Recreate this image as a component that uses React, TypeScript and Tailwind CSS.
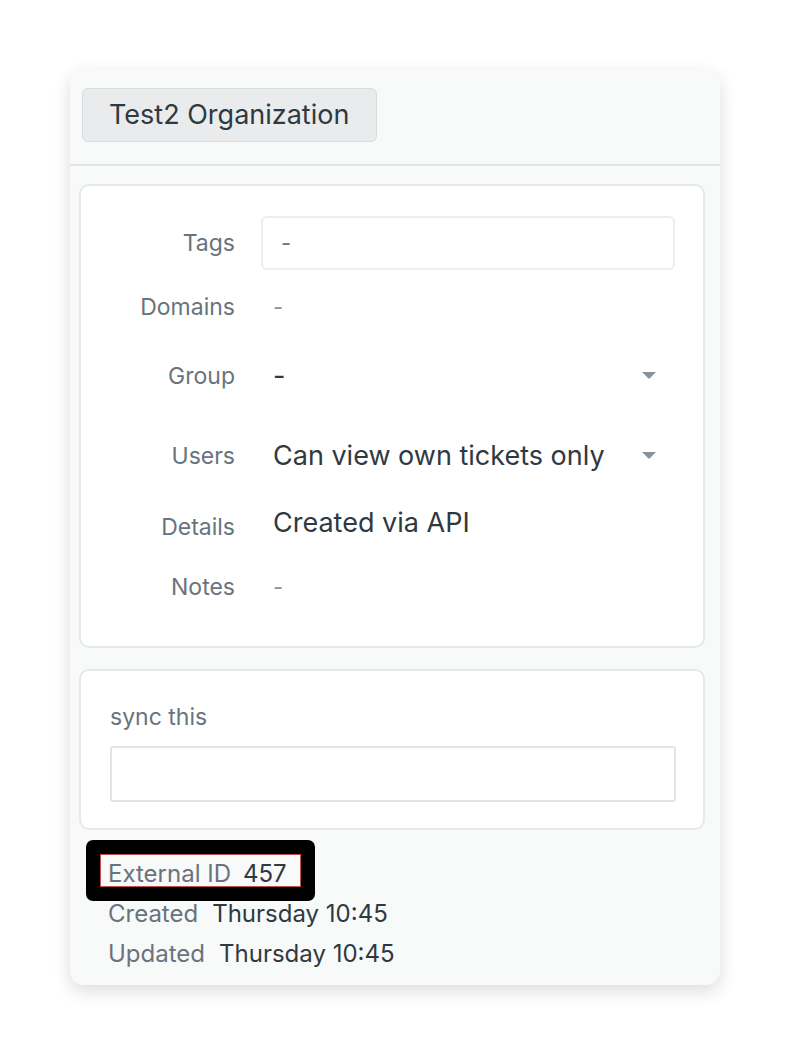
import React from "react";

const font = { fontFamily: "Inter, 'Liberation Sans', Arial, sans-serif" };

function Caret() {
  return (
    <svg width="14" height="8" viewBox="0 0 14 8" className="shrink-0">
      <path d="M0 0 L14 0 L7 7 Z" fill="#87929d" />
    </svg>
  );
}

type Row = { label: string; h: string; value: React.ReactNode };

export default function App() {
  const rows: Row[] = [
    {
      label: "Tags",
      h: "h-[54px]",
      value: (
        <div className="flex h-[54px] w-full items-center rounded-md border-2 border-[#eceef0] bg-white pl-[18px] text-[22px] text-[#68737d]">
          -
        </div>
      ),
    },
    { label: "Domains", h: "h-[74px]", value: <span className="pl-3 text-[22px] text-[#87929d]">-</span> },
    {
      label: "Group",
      h: "h-[64px]",
      value: (
        <div className="flex w-full items-center justify-between pl-3 pr-[19px]">
          <span className="text-[27px] text-[#2f3941]">-</span>
          <Caret />
        </div>
      ),
    },
    {
      label: "Users",
      h: "h-[96px]",
      value: (
        <div className="flex w-full items-center justify-between pl-3 pr-[19px]">
          <span className="text-[27px] text-[#2f3941]">Can view own tickets only</span>
          <Caret />
        </div>
      ),
    },
    {
      label: "Details",
      h: "h-[46px]",
      value: <span className="-mt-2 pl-3 text-[27px] text-[#2f3941]">Created via API</span>,
    },
    { label: "Notes", h: "h-[74px]", value: <span className="pl-3 text-[22px] text-[#87929d]">-</span> },
  ];

  return (
    <div className="min-h-[1056px] w-[790px] bg-white pt-[70px] pl-[70px]" style={font}>
      <div className="w-[650px] h-[915px] rounded-[14px] bg-[#f8f9f9] shadow-[0_6px_18px_rgba(0,0,0,0.14)]">
        {/* header */}
        <div className="h-[96px] border-b-2 border-[#e2e5e7] pl-3 pt-[18px]">
          <button className="h-[54px] w-[295px] rounded-md border border-[#d8dcde] bg-[#e9ebed] pl-[26px] text-left text-[27px] text-[#2f3941]">
            Test2 Organization
          </button>
        </div>

        {/* fields */}
        <div className="ml-[9px] mr-[15px] mt-[18px] rounded-[10px] border-2 border-[#e6e9eb] bg-white pt-[30px] pb-[22px]">
          {rows.map((r) => (
            <div key={r.label} className={`flex items-center ${r.h}`}>
              <div className="w-[154px] shrink-0 text-right text-[23px] text-[#68737d]">{r.label}</div>
              <div className="ml-[26px] mr-[28px] flex flex-1 items-center">{r.value}</div>
            </div>
          ))}
        </div>

        {/* custom field */}
        <div className="ml-[9px] mr-[15px] mt-[21px] h-[161px] rounded-[10px] border-2 border-[#e6e9eb] bg-white px-[29px] pt-[31px]">
          <div className="h-[30px] text-[23px] leading-[30px] text-[#68737d]">sync this</div>
          <div className="mt-[14px] mr-[-2px] h-[56px] rounded-[3px] border-2 border-[#e2e5e7] bg-white" />
        </div>

        {/* meta */}
        <div className="mt-[24px] pl-[38px] text-[24px] leading-[40px]">
          <div className="relative w-fit">
            <span className="text-[#68737d]">External ID</span>
            <span className="ml-[12px] text-[#2f3941]">457</span>
            <div className="pointer-events-none absolute left-[-22px] top-[-14px] h-[61px] w-[229px] rounded-[7px] border-[14px] border-black">
              <div className="h-full w-full border border-[#c0504d]" />
            </div>
          </div>
          <div>
            <span className="text-[#68737d]">Created</span>
            <span className="ml-[14px] text-[#2f3941]">Thursday 10:45</span>
          </div>
          <div>
            <span className="text-[#68737d]">Updated</span>
            <span className="ml-[14px] text-[#2f3941]">Thursday 10:45</span>
          </div>
        </div>
      </div>
    </div>
  );
}
